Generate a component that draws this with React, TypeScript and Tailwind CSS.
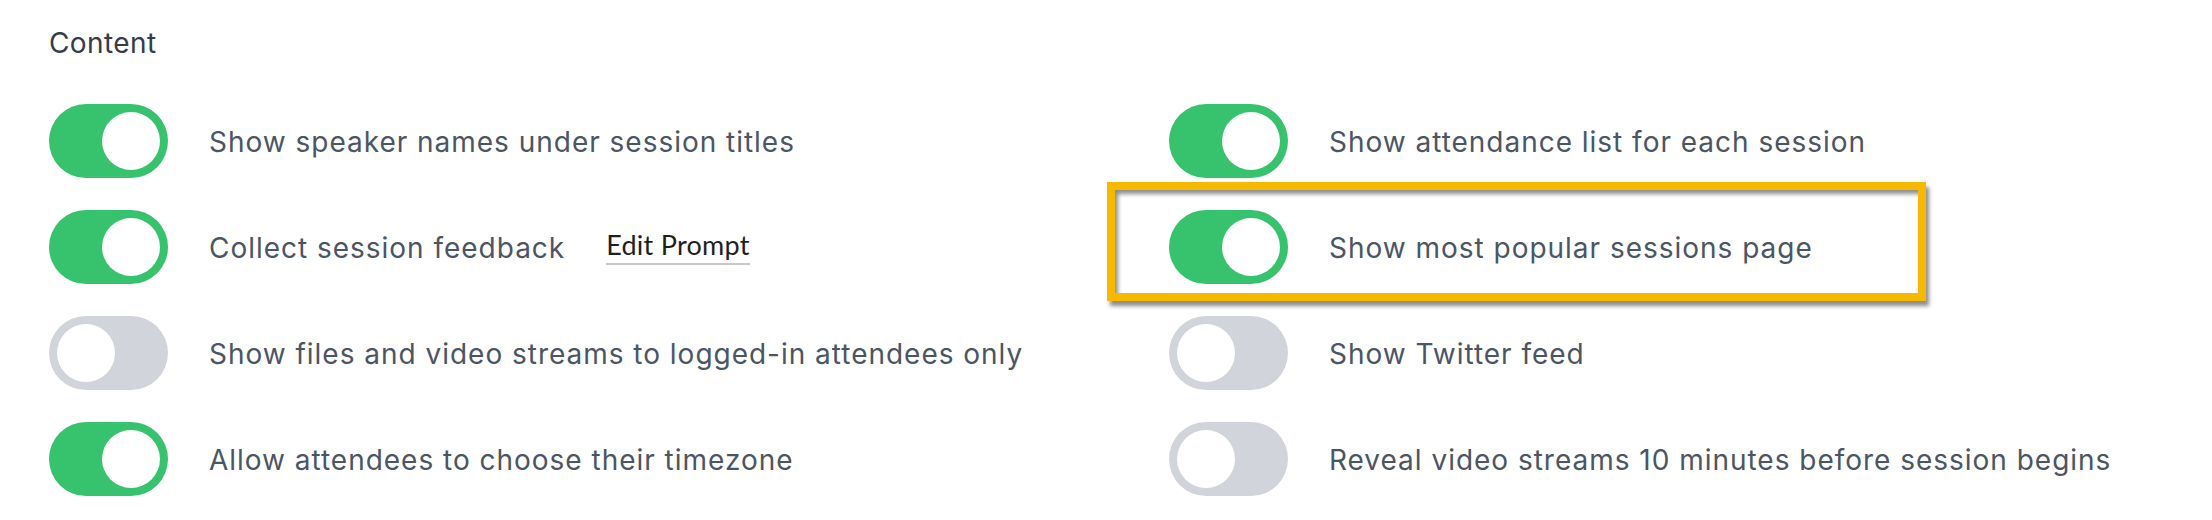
import React from "react";

type Setting = {
  label: string;
  on: boolean;
  action?: string;
};

const leftColumn: Setting[] = [
  { label: "Show speaker names under session titles", on: true },
  { label: "Collect session feedback", on: true, action: "Edit Prompt" },
  { label: "Show files and video streams to logged-in attendees only", on: false },
  { label: "Allow attendees to choose their timezone", on: true },
];

const rightColumn: Setting[] = [
  { label: "Show attendance list for each session", on: true },
  { label: "Show most popular sessions page", on: true },
  { label: "Show Twitter feed", on: false },
  { label: "Reveal video streams 10 minutes before session begins", on: false },
];

function Toggle({ on }: { on: boolean }) {
  return (
    <div
      className={
        on
          ? "flex h-[74px] w-[119px] shrink-0 items-center justify-end rounded-full bg-[#37c36d] px-[8px]"
          : "flex h-[74px] w-[119px] shrink-0 items-center justify-start rounded-full bg-[#d1d5db] px-[8px]"
      }
    >
      <div className="h-[58px] w-[58px] rounded-full bg-white" />
    </div>
  );
}

function SettingRow({ setting }: { setting: Setting }) {
  return (
    <div className="flex items-center gap-[41px]">
      <Toggle on={setting.on} />
      <span className="pt-[2px] text-[28px] leading-[40px] tracking-[0.035em] text-[#4b5563]">
        {setting.label}
      </span>
      {setting.action && (
        <span className="border-b-2 border-[#c9c9c9] pb-[3px] font-['Lato',sans-serif] text-[27px] leading-[30px] tracking-[0.01em] text-[#1f1f1f]">
          {setting.action}
        </span>
      )}
    </div>
  );
}

export default function App() {
  return (
    <main className="relative h-[520px] w-[2212px] bg-white pl-[49px] pt-[23px] font-['Inter',sans-serif]">
      <h2 className="text-[28px] leading-[40px] tracking-[0.015em] text-[#343c4a]">Content</h2>

      <div className="mt-[41px] grid grid-cols-[1120px_1fr]">
        <div className="flex flex-col gap-[32px]">
          {leftColumn.map((s) => (
            <SettingRow key={s.label} setting={s} />
          ))}
        </div>
        <div className="flex flex-col gap-[32px]">
          {rightColumn.map((s) => (
            <SettingRow key={s.label} setting={s} />
          ))}
        </div>
      </div>

      {/* highlight annotation */}
      <div className="pointer-events-none absolute left-[1107px] top-[182px] h-[119px] w-[819px] border-[8px] border-[#f7b900] shadow-[3px_5px_4px_rgba(0,0,0,0.45),inset_3px_4px_4px_rgba(0,0,0,0.45)]" />
    </main>
  );
}
